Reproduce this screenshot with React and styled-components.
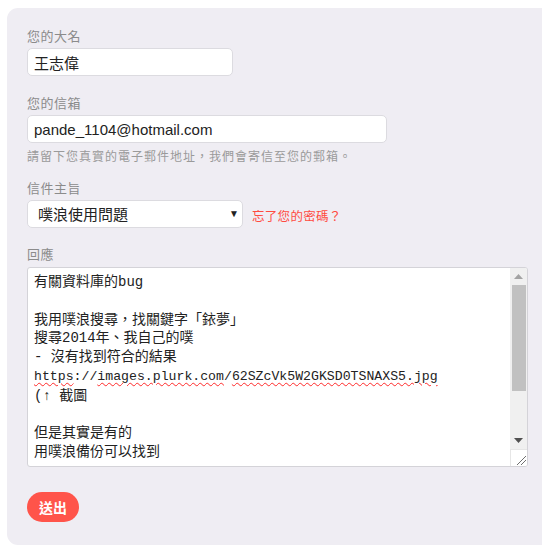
import React from 'react';
import styled, { createGlobalStyle } from 'styled-components';

const GlobalStyle = createGlobalStyle`
  body {
    margin: 0;
    background: #fff;
    overflow-x: hidden;
    font-family: "Liberation Sans", "Noto Sans CJK TC", sans-serif;
  }
`;

const Panel = styled.form`
  margin: 8px 0 8px 7px;
  padding: 20px 20px 23px 20px;
  background: #efedf3;
  border-radius: 11px 0 0 11px;
`;

const Group = styled.div`
  margin-bottom: ${(p) => p.$gap || 18}px;
`;

const Label = styled.label`
  display: block;
  font-size: 13px;
  line-height: 18px;
  letter-spacing: 0.5px;
  color: #8b8b8b;
  margin-bottom: ${(p) => p.$gap || 3}px;
`;

const Input = styled.input`
  display: block;
  box-sizing: border-box;
  width: ${(p) => p.$width}px;
  height: 28px;
  padding: 0 6px;
  border: 1px solid #dcdbe0;
  border-radius: 5px;
  background: #fff;
  font-family: "Liberation Sans", "Noto Sans CJK TC", sans-serif;
  font-size: 15px;
  color: #222;
  outline: none;
`;

const Hint = styled.div`
  margin-top: 6px;
  font-size: 12px;
  line-height: 16px;
  letter-spacing: 1px;
  color: #9a9a9a;
`;

const SelectRow = styled.div`
  display: flex;
  align-items: center;
  gap: 9px;
`;

const SelectWrap = styled.div`
  position: relative;
  width: 216px;
`;

const Select = styled.select`
  appearance: none;
  display: block;
  width: 100%;
  height: 28px;
  padding: 0 22px 0 10px;
  border: 1px solid #dcdbe0;
  border-radius: 5px;
  background: #fff;
  font-family: "Liberation Sans", "Noto Sans CJK TC", sans-serif;
  font-size: 15px;
  color: #222;
  outline: none;
`;

const Caret = styled.span`
  position: absolute;
  right: 4px;
  top: 9px;
  font-size: 10px;
  line-height: 10px;
  color: #222;
  pointer-events: none;
`;

const ForgotLink = styled.a`
  font-size: 12.5px;
  letter-spacing: 0.3px;
  color: #ff4b3f;
  text-decoration: none;
  margin-top: 2px;
`;

const TextBox = styled.div`
  display: flex;
  box-sizing: border-box;
  width: 501px;
  height: 200px;
  border: 1px solid #d4d3d8;
  border-radius: 3px;
  background: #fff;
  overflow: hidden;
`;

const TextContent = styled.div`
  flex: 1;
  padding: 5px 6px;
  overflow: hidden;
  font-family: "Liberation Mono", "Noto Sans CJK TC", monospace;
  font-size: 14px;
  line-height: 18.8px;
  color: #222;
  white-space: pre-wrap;
`;

const Line = styled.div`
  min-height: 18.8px;
`;

const Code = styled.span`
  font-size: 13.2px;
`;

const Typo = styled.span`
  text-decoration: underline wavy #ff2a2a;
  text-decoration-thickness: 1px;
  text-underline-offset: 2px;
`;

const ScrollColumn = styled.div`
  display: flex;
  flex-direction: column;
  width: 17px;
  background: #f0f0f0;
`;

const ScrollButton = styled.div`
  height: 17px;
  display: flex;
  align-items: center;
  justify-content: center;
`;

const Track = styled.div`
  flex: 1;
  padding: 0 1px 0 2px;
`;

const Thumb = styled.div`
  height: 106px;
  background: #c1c1c1;
`;

const Resizer = styled.div`
  height: 16px;
  background: #fff;
  border-left: 1px solid #e6e6e6;
  border-top: 1px solid #e6e6e6;
  display: flex;
  align-items: flex-end;
  justify-content: flex-end;
`;

const SubmitButton = styled.button`
  display: block;
  height: 30px;
  padding: 0 12px;
  border: none;
  border-radius: 16px;
  background: #ff544a;
  color: #fff;
  font-family: "Noto Sans CJK TC", sans-serif;
  font-size: 14px;
  font-weight: 700;
  cursor: pointer;
`;

const lines = [
  '有關資料庫的bug',
  '',
  '我用噗浪搜尋，找關鍵字「銥夢」',
  '搜尋2014年、我自己的噗',
  '- 沒有找到符合的結果',
  null,
  '(↑ 截圖',
  '',
  '但是其實是有的',
  '用噗浪備份可以找到',
];

const App = () => {
  return (
    <>
      <GlobalStyle />
      <Panel onSubmit={(e) => e.preventDefault()}>
        <Group $gap={19}>
          <Label $gap={2}>您的大名</Label>
          <Input $width={206} defaultValue="王志偉" />
        </Group>

        <Group $gap={15}>
          <Label $gap={2}>您的信箱</Label>
          <Input $width={360} defaultValue="pande_1104@hotmail.com" />
          <Hint>請留下您真實的電子郵件地址，我們會寄信至您的郵箱。</Hint>
        </Group>

        <Group>
          <Label $gap={2}>信件主旨</Label>
          <SelectRow>
            <SelectWrap>
              <Select defaultValue="use">
                <option value="use">噗浪使用問題</option>
              </Select>
              <Caret>▼</Caret>
            </SelectWrap>
            <ForgotLink href="#">忘了您的密碼？</ForgotLink>
          </SelectRow>
        </Group>

        <Group $gap={25}>
          <Label>回應</Label>
          <TextBox>
            <TextContent>
              {lines.map((text, i) =>
                text === null ? (
                  <Line key={i}>
                    <Code>
                      <Typo>https</Typo>://<Typo>images.plurk.com</Typo>/<Typo>62SZcVk5W2GKSD0TSNAXS5.jpg</Typo>
                    </Code>
                  </Line>
                ) : (
                  <Line key={i}>{text}</Line>
                )
              )}
            </TextContent>
            <ScrollColumn>
              <ScrollButton>
                <svg width="9" height="5" viewBox="0 0 9 5">
                  <path d="M0 5 L4.5 0 L9 5 Z" fill="#a3a3a3" />
                </svg>
              </ScrollButton>
              <Track>
                <Thumb />
              </Track>
              <ScrollButton>
                <svg width="9" height="5" viewBox="0 0 9 5">
                  <path d="M0 0 L4.5 5 L9 0 Z" fill="#505050" />
                </svg>
              </ScrollButton>
              <Resizer>
                <svg width="12" height="12" viewBox="0 0 12 12">
                  <path d="M2 11 L11 2 M6 11 L11 6" stroke="#6f6f6f" strokeWidth="1" />
                </svg>
              </Resizer>
            </ScrollColumn>
          </TextBox>
        </Group>

        <SubmitButton type="submit">送出</SubmitButton>
      </Panel>
    </>
  );
};

export default App;
